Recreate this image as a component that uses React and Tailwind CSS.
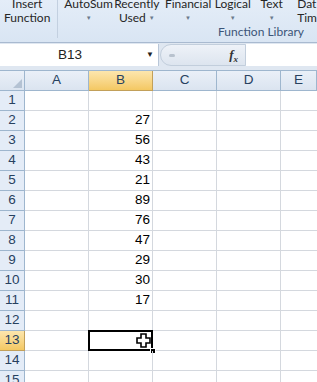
import React from "react";

const rows = [
  { n: 1, v: "" },
  { n: 2, v: "27" },
  { n: 3, v: "56" },
  { n: 4, v: "43" },
  { n: 5, v: "21" },
  { n: 6, v: "89" },
  { n: 7, v: "76" },
  { n: 8, v: "47" },
  { n: 9, v: "29" },
  { n: 10, v: "30" },
  { n: 11, v: "17" },
  { n: 12, v: "" },
  { n: 13, v: "", active: true },
  { n: 14, v: "" },
  { n: 15, v: "" },
];

const RibbonButton = ({ top, bottom, arrow, className }) => (
  <div className={"flex flex-col items-center leading-[14px] whitespace-nowrap " + className}>
    <span>{top}</span>
    <span className="flex items-center gap-[3px] h-[14px]">
      {bottom}
      {arrow && <span className="text-[6px] leading-[8px] text-[#6b7a8c]">▼</span>}
    </span>
  </div>
);

const Cross = () => (
  <svg width="15" height="15" viewBox="0 0 15 15" className="absolute right-[2px] top-[2px]">
    <path
      d="M5 1h5v4h4v5h-4v4h-5v-4h-4v-5h4z"
      fill="#fff"
      stroke="#000"
      strokeWidth="1.6"
    />
  </svg>
);

const headerBg = "bg-gradient-to-b from-[#eaf0f8] to-[#dbe4f0] border-[#9eb6ce]";
const activeBg = "bg-gradient-to-b from-[#fce6ad] to-[#f4c862] border-[#c2a05a]";

export default function App() {
  return (
    <div className="w-[317px] h-[382px] overflow-hidden bg-white font-['Lato',sans-serif]">
      {/* ribbon */}
      <div className="flex flex-col h-[43px] bg-gradient-to-b from-[#e4edf8] to-[#d9e5f3] border-b border-[#a9bad0] text-[12px] text-[#262626]">
        <div className="flex items-start h-[27px] -mt-[3px]">
          <RibbonButton top="Insert" bottom="Function" className="w-[56px]" />
          <div className="w-px h-[38px] bg-[#c3d0e0] mt-[3px] ml-[3px]" />
          <RibbonButton top="AutoSum" bottom="" arrow className="w-[54px] ml-[4px]" />
          <RibbonButton top="Recently" bottom="Used" arrow className="w-[44px]" />
          <RibbonButton top="Financial" bottom="" arrow className="w-[52px] ml-[4px]" />
          <RibbonButton top="Logical" bottom="" arrow className="w-[40px]" />
          <RibbonButton top="Text" bottom="" arrow className="w-[36px] ml-[2px]" />
          <RibbonButton top="Dat" bottom="Tim" className="w-[20px] ml-[8px] !items-start" />
        </div>
        <div className="ml-[218px] mt-[1px] text-[12px] leading-[14px] text-[#3b5578] whitespace-nowrap">
          Function Library
        </div>
      </div>

      {/* formula bar */}
      <div className="flex h-[27px] bg-[#dfe7f1] pt-[1px]">
        <div className="relative w-[159px] h-[22px] bg-white border-r border-[#b8c6d8] flex items-center justify-center text-[13.5px] text-[#222] font-['Liberation_Sans',sans-serif]">
          <span className="ml-[-18px]">B13</span>
          <span className="absolute right-[4px] top-[5px] text-[8px]">▼</span>
        </div>
        <div className="w-[86px] h-[22px] ml-[1px] rounded-l-[11px] bg-gradient-to-b from-[#eef2f8] to-[#dde5ef] border border-[#c2cedc] flex items-center justify-between pl-[8px] pr-[7px]">
          <span className="w-[6px] h-[3px] rounded-full bg-[#b8c2ce]" />
          <span className="font-['Liberation_Serif',serif] italic font-bold text-[13px] text-[#333]">
            f<sub className="text-[9px]">x</sub>
          </span>
        </div>
        <div className="flex-1 h-[22px] bg-white" />
      </div>

      {/* grid */}
      <div className="grid grid-cols-[25px_64px_64px_64px_64px_1fr] text-[13.5px] font-['Liberation_Sans',sans-serif] border-t border-[#9eb6ce]">
        <div className={"h-[20px] border-b border-r relative " + headerBg}>
          <div className="absolute right-[2px] bottom-[2px] w-0 h-0 border-l-[9px] border-l-transparent border-b-[9px] border-b-[#b4c2d3]" />
        </div>
        {["A", "B", "C", "D", "E"].map((c) => (
          <div
            key={c}
            className={
              "h-[20px] flex items-center justify-center border-b border-r text-[#27415f] " +
              (c === "B" ? activeBg : headerBg)
            }
          >
            {c}
          </div>
        ))}
        {rows.map((r) => (
          <React.Fragment key={r.n}>
            <div
              className={
                "h-[20px] flex items-center justify-center border-b border-r text-[#27415f] " +
                (r.active ? activeBg : "bg-[#e4ecf7] border-[#9eb6ce]")
              }
            >
              {r.n}
            </div>
            <div className="h-[20px] border-b border-r border-[#d4d8de]" />
            <div
              className={
                "relative h-[20px] flex items-center justify-end pr-[2px] text-black " +
                (r.active ? "" : "border-b border-r border-[#d4d8de]")
              }
            >
              {r.v}
              {r.active && (
                <>
                  <div className="absolute -left-px -top-px w-[65px] h-[21px] border-2 border-black" />
                  <div className="absolute right-[-3px] bottom-[-3px] w-[6px] h-[6px] bg-black border border-white" />
                  <Cross />
                </>
              )}
            </div>
            <div className="h-[20px] border-b border-r border-[#d4d8de]" />
            <div className="h-[20px] border-b border-r border-[#d4d8de]" />
            <div className="h-[20px] border-b border-[#d4d8de]" />
          </React.Fragment>
        ))}
      </div>
    </div>
  );
}
